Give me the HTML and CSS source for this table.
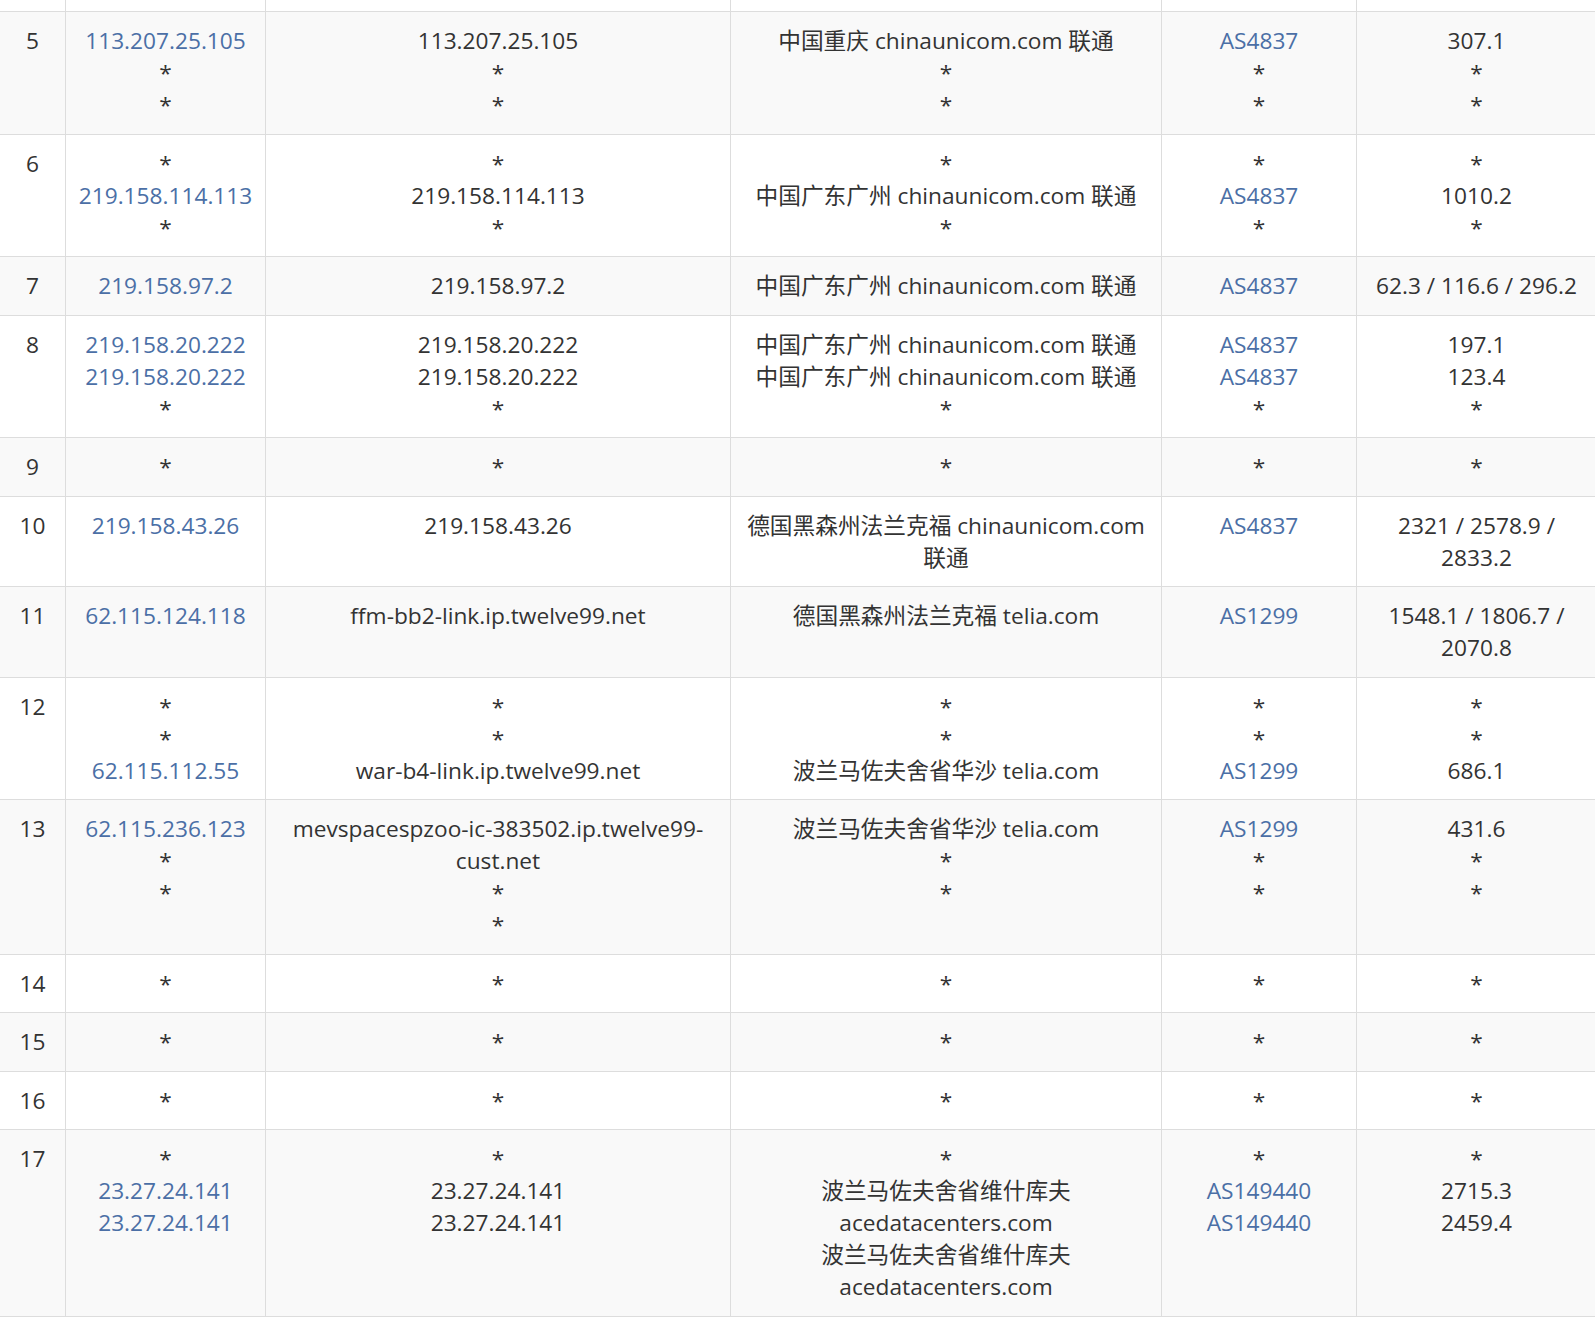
FILE: index.html
```html
<!DOCTYPE html>
<html lang="zh-CN">
<head>
<meta charset="utf-8">
<title>Traceroute</title>
<link rel="stylesheet" href="styles.css">
</head>
<body>
<table class="trace">
<colgroup>
<col class="c-hop"><col class="c-ip"><col class="c-host"><col class="c-loc"><col class="c-as"><col class="c-lat">
</colgroup>
<tbody>
<tr class="tail"><td></td><td></td><td></td><td></td><td></td><td></td></tr>
<tr>
<td>5</td>
<td><a href="#">113.207.25.105</a><br>*<br>*</td>
<td>113.207.25.105<br>*<br>*</td>
<td>中国重庆 chinaunicom.com 联通<br>*<br>*</td>
<td><a href="#">AS4837</a><br>*<br>*</td>
<td>307.1<br>*<br>*</td>
</tr>
<tr>
<td>6</td>
<td>*<br><a href="#">219.158.114.113</a><br>*</td>
<td>*<br>219.158.114.113<br>*</td>
<td>*<br>中国广东广州 chinaunicom.com 联通<br>*</td>
<td>*<br><a href="#">AS4837</a><br>*</td>
<td>*<br>1010.2<br>*</td>
</tr>
<tr>
<td>7</td>
<td><a href="#">219.158.97.2</a></td>
<td>219.158.97.2</td>
<td>中国广东广州 chinaunicom.com 联通</td>
<td><a href="#">AS4837</a></td>
<td>62.3 / 116.6 / 296.2</td>
</tr>
<tr>
<td>8</td>
<td><a href="#">219.158.20.222</a><br><a href="#">219.158.20.222</a><br>*</td>
<td>219.158.20.222<br>219.158.20.222<br>*</td>
<td>中国广东广州 chinaunicom.com 联通<br>中国广东广州 chinaunicom.com 联通<br>*</td>
<td><a href="#">AS4837</a><br><a href="#">AS4837</a><br>*</td>
<td>197.1<br>123.4<br>*</td>
</tr>
<tr>
<td>9</td><td>*</td><td>*</td><td>*</td><td>*</td><td>*</td>
</tr>
<tr>
<td>10</td>
<td><a href="#">219.158.43.26</a></td>
<td>219.158.43.26</td>
<td>德国黑森州法兰克福 chinaunicom.com 联通</td>
<td><a href="#">AS4837</a></td>
<td>2321 / 2578.9 / 2833.2</td>
</tr>
<tr>
<td>11</td>
<td><a href="#">62.115.124.118</a></td>
<td>ffm-bb2-link.ip.twelve99.net</td>
<td>德国黑森州法兰克福 telia.com</td>
<td><a href="#">AS1299</a></td>
<td>1548.1 / 1806.7 / 2070.8</td>
</tr>
<tr>
<td>12</td>
<td>*<br>*<br><a href="#">62.115.112.55</a></td>
<td>*<br>*<br>war-b4-link.ip.twelve99.net</td>
<td>*<br>*<br>波兰马佐夫舍省华沙 telia.com</td>
<td>*<br>*<br><a href="#">AS1299</a></td>
<td>*<br>*<br>686.1</td>
</tr>
<tr>
<td>13</td>
<td><a href="#">62.115.236.123</a><br>*<br>*</td>
<td>mevspacespzoo-ic-383502.ip.twelve99-cust.net<br>*<br>*</td>
<td>波兰马佐夫舍省华沙 telia.com<br>*<br>*</td>
<td><a href="#">AS1299</a><br>*<br>*</td>
<td>431.6<br>*<br>*</td>
</tr>
<tr>
<td>14</td><td>*</td><td>*</td><td>*</td><td>*</td><td>*</td>
</tr>
<tr>
<td>15</td><td>*</td><td>*</td><td>*</td><td>*</td><td>*</td>
</tr>
<tr>
<td>16</td><td>*</td><td>*</td><td>*</td><td>*</td><td>*</td>
</tr>
<tr>
<td>17</td>
<td>*<br><a href="#">23.27.24.141</a><br><a href="#">23.27.24.141</a></td>
<td>*<br>23.27.24.141<br>23.27.24.141</td>
<td>*<br>波兰马佐夫舍省维什库夫 acedatacenters.com<br>波兰马佐夫舍省维什库夫 acedatacenters.com</td>
<td>*<br><a href="#">AS149440</a><br><a href="#">AS149440</a></td>
<td>*<br>2715.3<br>2459.4</td>
</tr>
</tbody>
</table>
</body>
</html>
```
FILE: styles.css
```css
html, body {
  margin: 0;
  padding: 0;
  background: #ffffff;
}
body {
  font-family: "Open Sans", "Noto Sans CJK SC", sans-serif;
  font-size: 22.7px;
  color: #333333;
}
.trace {
  border-collapse: collapse;
  table-layout: fixed;
  width: 1597px;
  margin-left: -1px;
}
.c-hop { width: 66px; }
.c-ip { width: 200px; }
.c-host { width: 465px; }
.c-loc { width: 431px; }
.c-as { width: 195px; }
.c-lat { width: 240px; }
.trace td {
  border: 1px solid #dddddd;
  padding: 13px 8px 12.5px;
  line-height: 32px;
  text-align: center;
  vertical-align: top;
  word-break: keep-all;
}
.trace tr.tail td {
  height: 11px;
  padding: 0;
  border-top: none;
  line-height: 0;
}
.trace tbody tr:nth-child(even) {
  background: #f9f9f9;
}
.trace a {
  color: #4b6fa6;
  text-decoration: none;
}
```
